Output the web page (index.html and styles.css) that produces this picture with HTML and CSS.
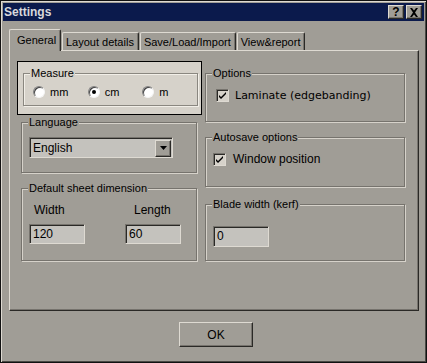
FILE: index.html
```html
<!DOCTYPE html>
<html lang="en">
<head>
    <meta charset="UTF-8">
    <title>Settings</title>
    <link rel="stylesheet" href="styles.css">
</head>
<body>
    <div class="window">
        <div class="titlebar">
            <span class="title">Settings</span>
            <div class="caption-btns">
                <span class="cbtn">?</span>
                <span class="cbtn">
                    <svg width="10" height="9" viewBox="0 0 10 9"><path d="M1 0h2l2 2.5L7 0h2L6 4.5L9 9H7L5 6.5L3 9H1l3-4.5z" fill="#000"/></svg>
                </span>
            </div>
        </div>

        <div class="tabs">
            <div class="tab active">General</div>
            <div class="tab">Layout details</div>
            <div class="tab">Save/Load/Import</div>
            <div class="tab">View&amp;report</div>
        </div>

        <div class="panel">
            <div class="col-left">
                <div class="focus-box">
                    <div class="group measure">
                        <span class="legend">Measure</span>
                        <div class="radios">
                            <label class="radio-item"><span class="radio"></span>mm</label>
                            <label class="radio-item"><span class="radio checked"></span>cm</label>
                            <label class="radio-item"><span class="radio"></span>m</label>
                        </div>
                    </div>
                </div>

                <div class="group language">
                    <span class="legend">Language</span>
                    <div class="combo">
                        <span class="combo-text">English</span>
                        <span class="combo-btn">
                            <svg width="7" height="4" viewBox="0 0 7 4"><path d="M0 0h7L3.5 4z" fill="#000"/></svg>
                        </span>
                    </div>
                </div>

                <div class="group sheet">
                    <span class="legend">Default sheet dimension</span>
                    <div class="dims">
                        <div class="dim">
                            <span class="dim-label">Width</span>
                            <div class="field">120</div>
                        </div>
                        <div class="dim">
                            <span class="dim-label">Length</span>
                            <div class="field">60</div>
                        </div>
                    </div>
                </div>
            </div>

            <div class="col-right">
                <div class="group options">
                    <span class="legend">Options</span>
                    <label class="check-item wide">
                        <span class="check"><svg width="9" height="9" viewBox="0 0 9 9"><path d="M1 4l2 2 5-5v2L3 8 1 6z" fill="#000"/></svg></span>
                        Laminate (edgebanding)
                    </label>
                </div>

                <div class="group autosave">
                    <span class="legend">Autosave options</span>
                    <label class="check-item">
                        <span class="check"><svg width="9" height="9" viewBox="0 0 9 9"><path d="M1 4l2 2 5-5v2L3 8 1 6z" fill="#000"/></svg></span>
                        Window position
                    </label>
                </div>

                <div class="group blade">
                    <span class="legend">Blade width (kerf)</span>
                    <div class="field">0</div>
                </div>
            </div>
        </div>

        <div class="footer">
            <button class="btn">OK</button>
        </div>
    </div>
</body>
</html>
```

FILE: styles.css
```css
body{
    margin:0;
    background:#000;
    font-family:"Liberation Sans", Arial, sans-serif;
    font-size:11px;
    color:#000;
}
.window{
    width:427px;
    height:363px;
    box-sizing:border-box;
    border:1px solid #111;
    padding:2px;
    background:#a09d96;
    box-shadow:inset 1px 1px #dedad2, inset -1px -1px #4a4844;
    display:flex;
    flex-direction:column;
}
.titlebar{
    height:18px;
    flex:none;
    background:#0b1a4c;
    display:flex;
    align-items:center;
    justify-content:space-between;
    padding:0 2px 0 1px;
}
.title{
    font-weight:bold;
    font-size:12px;
    color:#d8d8dc;
}
.caption-btns{
    display:flex;
    gap:2px;
}
.cbtn{
    width:16px;
    height:14px;
    box-sizing:border-box;
    background:#a09d96;
    border:1px solid;
    border-color:#dedad2 #2a2926 #2a2926 #dedad2;
    box-shadow:inset -1px -1px #76736d;
    display:flex;
    align-items:center;
    justify-content:center;
    font-weight:bold;
    font-size:12px;
    line-height:1;
}

.tabs{
    display:flex;
    align-items:flex-end;
    height:21px;
    margin:8px 0 0 6px;
    position:relative;
    z-index:1;
}
.tab{
    height:18px;
    box-sizing:border-box;
    padding:2px 4px 0 3px;
    border:1px solid;
    border-bottom:none;
    border-color:#dedad2 #2a2926 #dedad2 #dedad2;
    box-shadow:inset -1px 0 #76736d;
    border-radius:2px 2px 0 0;
    font-size:11px;
    line-height:14px;
    margin-left:1px;
}
.tab.active{
    height:22px;
    margin-bottom:-1px;
    margin-left:0;
    padding:3px 6px 0 7px;
    background:#a09d96;
    width:52px;
}

.panel{
    margin-left:6px;
    width:410px;
    height:261px;
    flex:none;
    box-sizing:border-box;
    border:1px solid;
    border-color:#dedad2 #2a2926 #2a2926 #dedad2;
    box-shadow:inset -1px -1px #76736d;
    padding:10px 0 0 7px;
    display:flex;
    gap:3px;
}
.col-left{
    width:185px;
    display:flex;
    flex-direction:column;
}
.col-right{
    width:200px;
    padding-top:12px;
    display:flex;
    flex-direction:column;
}

.group{
    position:relative;
    box-sizing:border-box;
    border:1px solid #76736d;
    box-shadow:inset 1px 1px #d6d2ca, 1px 1px #d6d2ca;
}
.legend{
    position:absolute;
    top:-7px;
    left:6px;
    padding:0 1px;
    line-height:13px;
    background:#a09d96;
}

.focus-box{
    height:54px;
    box-sizing:border-box;
    border:1px solid #000;
    background:#d6d2ca;
    padding:11px 0 0 5px;
}
.measure{
    width:175px;
    height:33px;
    padding:12px 0 0 9px;
    border-color:#8a8780;
    box-shadow:inset 1px 1px #f2efe8, 1px 1px #f2efe8;
}
.measure .legend{
    background:#d6d2ca;
}
.radios{
    display:flex;
}
.radio-item{
    width:55px;
    display:flex;
    align-items:center;
    gap:5px;
    height:12px;
}
.radio{
    width:12px;
    height:12px;
    box-sizing:border-box;
    border-radius:50%;
    border:1px solid;
    border-color:#808080 #f4f4f4 #f4f4f4 #808080;
    box-shadow:inset 1px 1px #404040;
    background:#fff;
    display:flex;
    align-items:center;
    justify-content:center;
}
.radio.checked::after{
    content:"";
    width:4px;
    height:4px;
    border-radius:50%;
    background:#000;
}

.language{
    margin:7px 0 0 4px;
    width:176px;
    height:51px;
    padding:14px 0 0 7px;
}
.combo{
    width:144px;
    height:21px;
    box-sizing:border-box;
    border:1px solid;
    border-color:#76736d #dedad2 #dedad2 #76736d;
    box-shadow:inset 1px 1px #2a2926;
    background:#c4c2bd;
    display:flex;
    align-items:center;
    justify-content:space-between;
    padding:1px 1px 0 3px;
}
.combo-text{
    font-size:12px;
}
.combo-btn{
    width:16px;
    height:17px;
    box-sizing:border-box;
    background:#a09d96;
    border:1px solid;
    border-color:#dedad2 #2a2926 #2a2926 #dedad2;
    box-shadow:inset -1px -1px #76736d;
    display:flex;
    align-items:center;
    justify-content:center;
}

.sheet{
    margin:15px 0 0 4px;
    width:176px;
    height:73px;
    padding:15px 0 0 7px;
}
.dims{
    display:flex;
}
.dim{
    width:96px;
    flex:none;
    display:flex;
    flex-direction:column;
}
.dim:last-child .dim-label{
    padding-left:9px;
}
.dim-label{
    font-size:12px;
    line-height:13px;
    padding-left:5px;
    margin-bottom:7px;
}
.field{
    width:56px;
    height:20px;
    box-sizing:border-box;
    border:1px solid;
    border-color:#76736d #dedad2 #dedad2 #76736d;
    box-shadow:inset 1px 1px #2a2926;
    background:#c4c2bd;
    padding:2px 0 0 3px;
    font-size:12px;
    line-height:15px;
}

.options{
    height:49px;
    padding:15px 0 0 10px;
}
.autosave{
    margin-top:15px;
    height:50px;
    padding:14px 0 0 7px;
}
.blade{
    margin-top:17px;
    height:57px;
    padding:21px 0 0 7px;
}
.blade .field{
    height:21px;
}
.check-item{
    display:flex;
    align-items:center;
    gap:7px;
    font-size:12px;
}
.check-item.wide{
    font-family:"DejaVu Sans", Verdana, sans-serif;
    font-size:11px;
    gap:6px;
}
.check{
    width:13px;
    height:13px;
    box-sizing:border-box;
    border:1px solid;
    border-color:#76736d #dedad2 #dedad2 #76736d;
    box-shadow:inset 1px 1px #2a2926;
    background:#d6d2ca;
    display:flex;
    align-items:center;
    justify-content:center;
}

.footer{
    padding:11px 0 0 176px;
}
.btn{
    width:74px;
    height:25px;
    box-sizing:border-box;
    background:#a09d96;
    border:1px solid;
    border-color:#dedad2 #2a2926 #2a2926 #dedad2;
    box-shadow:inset -1px -1px #76736d;
    font-family:"Liberation Sans", Arial, sans-serif;
    font-size:12px;
    color:#000;
    padding:0;
}
```
